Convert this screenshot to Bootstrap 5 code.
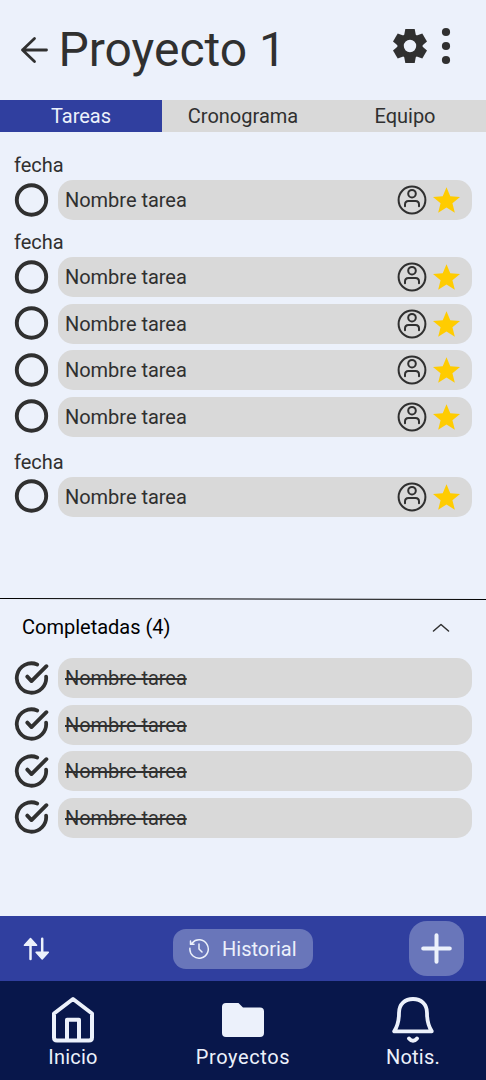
<!DOCTYPE html>
<html lang="es">
<head>
<meta charset="utf-8">
<meta name="viewport" content="width=device-width, initial-scale=1">
<title>Proyecto 1</title>
<link href="https://cdn.jsdelivr.net/npm/bootstrap@5.3.0/dist/css/bootstrap.min.css" rel="stylesheet">
<style>
  :root { --ink: #303030; --paper: #ecf1fb; --blue: #303f9f; --navy: #08174b; --gray: #d9d9d9; --pill: #6976ba; }
  body { font-family: Roboto, "Liberation Sans", sans-serif; font-size: 20px; line-height: 24px; color: var(--ink); background: var(--paper); }
  svg { display: block; flex: none; fill: none; stroke: currentColor; stroke-linecap: round; stroke-linejoin: round; }
  .app { height: 1080px; overflow: hidden; }
  .topbar { height: 100px; padding: 0 34px 0 20px; }
  .topbar h1 { font-size: 48px; line-height: 56px; font-weight: 400; margin: 0 0 0 10px; }
  .tabs { height: 32px; background: var(--gray); }
  .tabs .nav-link { border-radius: 0; padding: 0; height: 32px; line-height: 32px; color: var(--ink); }
  .tabs .nav-link.active { background: var(--blue); color: var(--paper); }
  .pending { height: 466px; padding: 21px 14px 0; }
  .date { height: 27px; }
  .tasks { display: grid; gap: 6.67px; }
  .task { height: 40px; }
  .task-name { height: 40px; margin-left: 9px; padding: 0 12px 0 7px; border-radius: 15px; background: var(--gray); letter-spacing: -.03px; }
  .star { fill: #ffcc00; stroke: none; margin-left: 6px; }
  .done-head { height: 58px; padding: 0 36px 4px 22px; color: #000; }
  .done { height: 258px; padding: 0 14px; }
  .toolbar { height: 65px; background: var(--blue); color: var(--paper); padding: 0 22px 0 23px; }
  .history { width: 140px; height: 40px; border-radius: 13px; background: var(--pill); color: var(--paper); font-size: 20px; line-height: 24px; }
  .add { width: 55px; height: 55px; border-radius: 18px; background: var(--pill); color: var(--paper); }
  .bottom-nav { height: 99px; background: var(--navy); padding: 13px 0 0; }
  .bottom-nav a { width: 170px; flex: none; color: var(--paper); letter-spacing: .2px; }
  .bottom-nav a.wide-label { letter-spacing: .6px; }
</style>
</head>
<body>
<svg width="0" height="0" class="position-absolute" aria-hidden="true">
  <symbol id="ring" viewBox="0 0 35 35"><circle cx="17.5" cy="17" r="14.7" stroke-width="3.9"/></symbol>
  <symbol id="check" viewBox="0 0 35 35"><path d="M23.200 3.500A14.700 14.700 0 1 0 32.100 15.600M13.300 15.600l4.200 4.500L32.400 5.200" stroke-width="3.8"/></symbol>
  <symbol id="person" viewBox="0 0 30 30"><circle cx="15" cy="15" r="13.4" stroke-width="2"/><circle cx="15" cy="8.700" r="3.800" stroke-width="2"/><path d="M8 21.300V19.500q0-3.500 3.500-3.500h7q3.500 0 3.500 3.500v1.800" stroke-width="2"/></symbol>
  <symbol id="star" viewBox="2 2 20 19"><path d="M12 2L14.800 8.800 22 9.200 16.400 13.900 18.180 21 12 17.100 5.820 21 7.600 13.900 2 9.200 9.200 8.800z"/></symbol>
</svg>
<div class="app d-flex flex-column">
  <header class="topbar d-flex align-items-center">
    <svg width="29" height="28" viewBox="0 0 29 28" stroke-width="2.8" style="margin-left:-.5px"><path d="M26.500 14H2.500M14.500 2.500L2.500 14l12 11.500"/></svg>
    <h1>Proyecto 1</h1>
    <svg class="ms-auto mb-2" width="36" height="36" viewBox="-18 -18 36 36" stroke="none">
      <g fill="currentColor" stroke="none">
        <path fill-rule="evenodd" d="M0-12.500A12.500 12.500 0 1 1 0 12.500A12.500 12.500 0 1 1 0-12.500M0-6.200A6.200 6.200 0 1 0 0 6.200A6.200 6.200 0 1 0 0-6.200"/>
        <g id="teeth"><path id="tooth" d="M-4.700-16.900H4.700L6.200-9H-6.200z"/><use href="#tooth" transform="rotate(60)"/><use href="#tooth" transform="rotate(120)"/></g>
        <use href="#teeth" transform="rotate(180)"/>
      </g>
    </svg>
    <svg class="mb-2" style="margin-left:12px" width="12" height="40" viewBox="0 0 12 40"><g fill="currentColor" stroke="none"><circle cx="6" cy="6" r="4.100"/><circle cx="6" cy="20" r="4.100"/><circle cx="6" cy="34" r="4.100"/></g></svg>
  </header>

  <nav class="tabs nav nav-pills nav-fill flex-nowrap">
    <a class="nav-link active w-100 text-center" href="#">Tareas</a>
    <a class="nav-link w-100 text-center" href="#">Cronograma</a>
    <a class="nav-link w-100 text-center" href="#">Equipo</a>
  </nav>

  <main class="pending" id="pending"></main>
  <svg width="486" height="2" viewBox="0 0 486 2"><path d="M0 .5L486 1.500" stroke="#000" stroke-width="1"/></svg>

  <div class="done-head d-flex align-items-center justify-content-between">
    <span>Completadas (4)</span>
    <svg width="18" height="10" viewBox="0 0 18 10" stroke-width="1.500" style="color:#303030"><path d="M1.500 9L9 2.500 16.500 9"/></svg>
  </div>
  <section class="done"><div class="tasks" id="done"></div></section>

  <div class="toolbar d-flex align-items-center justify-content-between">
    <svg width="28" height="24" viewBox="0 0 28 24" stroke-width="2.500"><path d="M7.500 22V6M19.200 1.700v16"/><path d="M7.500 1.500L1.400 8.300h12.200zM19.200 22L13.100 15.200h12.200z" fill="currentColor" stroke-width="1.500"/></svg>
    <button class="history btn border-0 d-flex align-items-center p-0" style="margin-left:26px" type="button">
      <svg style="margin:0 12px 0 15px" width="22" height="22" viewBox="0 0 22 22" stroke-width="1.500"><path d="M1.900 10.300A9.200 9.200 0 1 0 4.200 4.900M2.500 3v3.300H6M2.500 6.300L5.500 3.900M11 6v5l3 3"/></svg>
      Historial
    </button>
    <button class="add btn border-0 p-0 d-flex align-items-center justify-content-center" type="button" aria-label="Agregar">
      <svg width="32" height="32" viewBox="0 0 32 32" stroke-width="4"><path d="M15.500 2.200v26.600M2.200 15.500h26.600"/></svg>
    </button>
  </div>

  <nav class="bottom-nav d-flex justify-content-center">
    <a class="text-decoration-none d-flex flex-column align-items-center" href="#">
      <svg width="50" height="51" viewBox="0 0 50 51" stroke-width="4"><path d="M6 19.500L25 5l19 14.500V43.500q0 3-3 3H9q-3 0-3-3zM19 46V25.700h12V46"/></svg>
      Inicio
    </a>
    <a class="wide-label text-decoration-none d-flex flex-column align-items-center" href="#">
      <svg width="50" height="51" viewBox="0 0 50 51"><path d="M8 9H20.500L25 13.500H42q4 0 4 4V39q0 4-4 4H8q-4 0-4-4V13q0-4 4-4z" fill="currentColor" stroke="none"/></svg>
      Proyectos
    </a>
    <a class="text-decoration-none d-flex flex-column align-items-center" href="#">
      <svg width="50" height="51" viewBox="0 0 50 51" stroke-width="3.800"><path d="M6.200 37.300H43.800C40 31.500 39 26 39 19C39 10 33 5 25 5S11 10 11 19C11 26 10 31.500 6.200 37.300z"/><path d="M21 44.500Q25 49.200 29 44.500" stroke-width="4"/></svg>
      Notis.
    </a>
  </nav>
</div>
<script>
  const ring = '<svg width="35" height="35"><use href="#ring"/></svg>';
  const check = '<svg width="35" height="35"><use href="#check"/></svg>';
  const extras = '<svg class="ms-auto" width="30" height="30"><use href="#person"/></svg><svg class="star" width="27" height="26"><use href="#star"/></svg>';
  const openTask = `<div class="task d-flex align-items-center">${ring}<div class="task-name flex-grow-1 d-flex align-items-center">Nombre tarea${extras}</div></div>`;
  const doneTask = `<div class="task d-flex align-items-center">${check}<div class="task-name flex-grow-1 d-flex align-items-center"><s>Nombre tarea</s></div></div>`;
  const groups = [{ count: 1, after: 10 }, { count: 4, after: 13 }, { count: 1, after: 0 }];
  document.getElementById('pending').innerHTML = groups.map(g =>
    `<div style="margin-bottom:${g.after}px"><div class="date">fecha</div><div class="tasks">${openTask.repeat(g.count)}</div></div>`).join('');
  document.getElementById('done').innerHTML = doneTask.repeat(4);
</script>
<script src="https://cdn.jsdelivr.net/npm/bootstrap@5.3.0/dist/js/bootstrap.bundle.min.js"></script>
</body>
</html>
